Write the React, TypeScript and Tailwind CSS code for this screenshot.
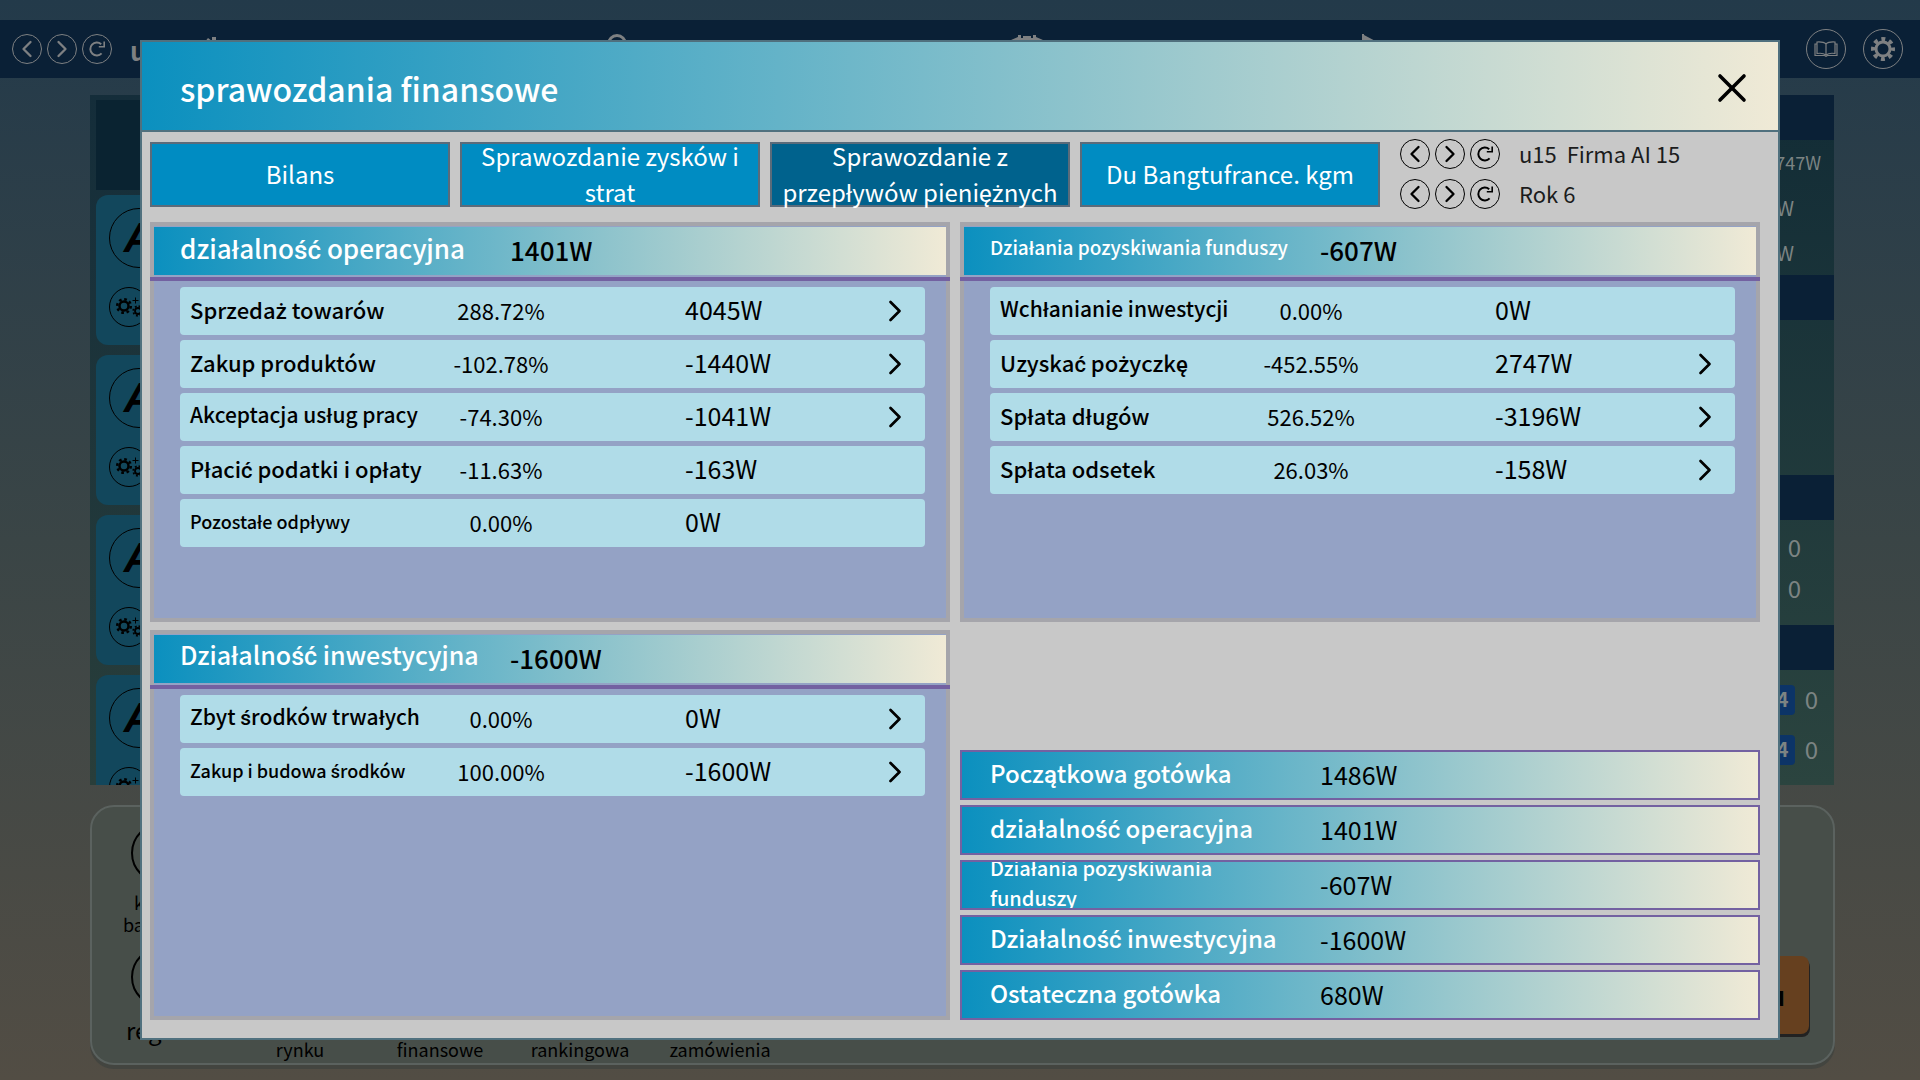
import { ChevronLeft, ChevronRight, X } from "lucide-react";
import { useState } from "react";

const TABS = [
  "Bilans",
  "Sprawozdanie zysków i strat",
  "Sprawozdanie z przepływów pieniężnych",
  "Du Bangtufrance. kgm",
];

type Row = {
  label: string;
  percent: string;
  value: string;
  more?: boolean;
  size?: string;
};

const OPERATING: Row[] = [
  { label: "Sprzedaż towarów", percent: "288.72%", value: "4045W", more: true },
  { label: "Zakup produktów", percent: "-102.78%", value: "-1440W", more: true },
  { label: "Akceptacja usług pracy", percent: "-74.30%", value: "-1041W", more: true, size: "text-[21px]" },
  { label: "Płacić podatki i opłaty", percent: "-11.63%", value: "-163W" },
  { label: "Pozostałe odpływy", percent: "0.00%", value: "0W", size: "text-lg" },
];

const FUNDING: Row[] = [
  { label: "Wchłanianie inwestycji", percent: "0.00%", value: "0W", size: "text-[21px]" },
  { label: "Uzyskać pożyczkę", percent: "-452.55%", value: "2747W", more: true },
  { label: "Spłata długów", percent: "526.52%", value: "-3196W", more: true },
  { label: "Spłata odsetek", percent: "26.03%", value: "-158W", more: true },
];

const INVESTING: Row[] = [
  { label: "Zbyt środków trwałych", percent: "0.00%", value: "0W", more: true, size: "text-[21px]" },
  { label: "Zakup i budowa środków", percent: "100.00%", value: "-1600W", more: true, size: "text-lg" },
];

const SUMMARY = [
  { label: "Początkowa gotówka", value: "1486W" },
  { label: "działalność operacyjna", value: "1401W" },
  { label: "Działania pozyskiwania funduszy", value: "-607W", size: "text-xl leading-[30px]" },
  { label: "Działalność inwestycyjna", value: "-1600W" },
  { label: "Ostateczna gotówka", value: "680W" },
];

// the CJK family has no Polish letters, so those come from Roboto
function Polish({ text }: { text: string }) {
  return (
    <>
      {text.split(/([śćżłęą])/).map((part, i) =>
        i % 2 ? (
          <span key={i} className="font-['Roboto',sans-serif] leading-none">
            {part}
          </span>
        ) : (
          part
        )
      )}
    </>
  );
}

function RefreshIcon() {
  return (
    <svg viewBox="0 0 18 18" className="size-[18px]" fill="none" stroke="currentColor">
      <path d="M13.200 4.200A6.500 6.500 0 1 0 13.600 13.400" strokeWidth="2" />
      <path d="M16.200 1.500V6.800H10.800" strokeWidth="1.600" />
    </svg>
  );
}

function Stepper({ name }: { name: string }) {
  return (
    <div className="flex gap-[5px]">
      <button
        aria-label={`${name}: poprzedni`}
        className="flex size-[30px] items-center justify-center rounded-full border border-current"
      >
        <ChevronLeft className="size-7 shrink-0" />
      </button>
      <button
        aria-label={`${name}: następny`}
        className="flex size-[30px] items-center justify-center rounded-full border border-current"
      >
        <ChevronRight className="size-7 shrink-0" />
      </button>
      <button
        aria-label={`${name}: odśwież`}
        className="flex size-[30px] items-center justify-center rounded-full border border-current"
      >
        <RefreshIcon />
      </button>
    </div>
  );
}

function Section({
  title,
  total,
  rows,
  size = "text-[26px]",
}: {
  title: string;
  total: string;
  rows: Row[];
  size?: string;
}) {
  return (
    <section className="flex flex-col border-4 border-[#a5a5ab] bg-[#94a2c5]">
      <div className="-mx-1 border-b-4 border-[#7361a1] px-1 pt-px pb-0.5">
        <div className="flex h-12 items-center bg-linear-to-r/srgb from-[#0b90bf] to-[#f0ead6] pb-1 pl-[26px] font-medium">
          <h2 className={`w-[330px] pb-1 whitespace-nowrap text-white ${size}`}>
            <Polish text={title} />
          </h2>
          <span className="text-[26px]">{total}</span>
        </div>
      </div>
      <ul className="flex flex-col gap-[5px] pt-1.5 pr-[21px] pl-[26px]">
        {rows.map((row) => (
          <li key={row.label} className="flex h-12 items-center rounded-sm bg-[#b0dce8] pr-3 pl-2.5">
            <span className={`w-[240px] pb-1 whitespace-nowrap font-medium ${row.size || "text-[22px]"}`}>
              <Polish text={row.label} />
            </span>
            <span className="w-[142px] pb-0.5 text-center text-[22px]">{row.percent}</span>
            <span className="flex-1 pb-0.5 pl-[113px] text-[25px]">{row.value}</span>
            {row.more && (
              <button aria-label={`Szczegóły: ${row.label}`}>
                <ChevronRight className="size-9" strokeWidth={1.8} />
              </button>
            )}
          </li>
        ))}
      </ul>
    </section>
  );
}

function NavBar() {
  return (
    <nav className="flex h-[58px] items-center bg-[#0a2036] pr-[17px] pl-3 text-[#7e8082]">
      <Stepper name="Gracz" />
      <span className="w-[74px] pl-[18px] text-[26px] font-bold">u</span>
      <div className="w-[421px] pl-[18px]">
        <svg viewBox="0 0 16 30" className="h-[30px] w-4" fill="currentColor">
          <path d="M0 9L4 4L8 7V3H12V30H0z" />
        </svg>
      </div>
      <div className="w-[404px]">
        <svg viewBox="0 0 20 30" className="h-[30px] w-5" fill="none" stroke="currentColor" strokeWidth="3">
          <circle cx="10" cy="10" r="8.5" />
        </svg>
      </div>
      <div className="w-[350px]">
        <svg viewBox="0 0 32 30" className="h-[30px] w-8" fill="currentColor">
          <path d="M0 6L7 3V1H10V4H12V2H20V4H22V1H25V3L32 6V14H0z" />
        </svg>
      </div>
      <svg viewBox="0 0 20 30" className="h-[30px] w-5" fill="currentColor">
        <path d="M1 0V30H3V14L20 10L3 1V0z" />
      </svg>
      <div className="ml-auto flex gap-[17px]">
        <button
          aria-label="Podręcznik"
          className="flex size-10 items-center justify-center rounded-full border border-current"
        >
          <svg viewBox="0 0 24 16" className="h-4 w-6" fill="none" stroke="currentColor" strokeWidth="1.2">
            <path d="M12 3C10 1 6 .8 3 1V12.500C6 12 10 12.500 12 14C14 12.500 18 12 21 12.500V1C18 .8 14 1 12 3V14" />
            <path d="M3 3H1V14.500H10.500L12 15.300L13.500 14.500H23V3H21" />
          </svg>
        </button>
        <button
          aria-label="Ustawienia"
          className="flex size-10 items-center justify-center rounded-full border border-current"
        >
          <svg viewBox="0 0 24 24" className="size-6" fill="none" stroke="currentColor">
            <circle cx="12" cy="12" r="7" strokeWidth="3" />
            <circle cx="12" cy="12" r="10" strokeWidth="4" strokeDasharray="3.927 3.927" strokeDashoffset="1.96" />
          </svg>
        </button>
      </div>
    </nav>
  );
}

function PlayerCard() {
  return (
    <div className="flex h-[150px] shrink-0 flex-col gap-[19px] rounded-xl bg-[#12475c] p-[13px]">
      <div className="flex size-[60px] items-center justify-center rounded-full border border-black font-['Liberation_Sans',sans-serif] text-[42px] leading-none font-bold italic">
        A
      </div>
      <div className="flex size-10 items-center justify-center rounded-full border border-black">
        <svg viewBox="0 0 30 22" className="h-[22px] w-[30px] shrink-0" fill="none" stroke="black">
          <circle cx="10" cy="10" r="4.500" strokeWidth="2.500" />
          <circle cx="10" cy="10" r="6.800" strokeWidth="2.500" strokeDasharray="2.670 2.670" />
          <circle cx="24" cy="15" r="3" strokeWidth="1.800" />
          <circle cx="24" cy="15" r="4.800" strokeWidth="1.800" strokeDasharray="1.885 1.885" />
          <path d="M21.500 1.500V7.500M18.500 4.500H24.500" />
        </svg>
      </div>
    </div>
  );
}

function Board() {
  return (
    <div className="mt-[17px] mr-[86px] ml-[90px] flex h-[690px] justify-between overflow-hidden">
      <div className="flex w-[300px] flex-col bg-linear-to-b from-[#142d3a] to-[#293e3a] pt-[5px] pl-1.5">
        <div className="mb-[5px] h-[90px] shrink-0 bg-[#0a2331]" />
        <div className="flex flex-col gap-2.5">
          <PlayerCard />
          <PlayerCard />
          <PlayerCard />
          <PlayerCard />
        </div>
      </div>
      <div className="w-[300px] bg-linear-to-b from-[#122c36] to-[#2b443f] text-right text-xl text-[#7c8483]">
        <div className="h-[45px] bg-[#0a2036]" />
        <p className="pr-[13px] text-lg leading-[45px]">2747W</p>
        <p className="pr-10 leading-[45px]">0W</p>
        <p className="pr-10 leading-[45px]">0W</p>
        <div className="h-[45px] bg-[#0a2036]" />
        <div className="h-[155px]" />
        <div className="h-[45px] bg-[#0a2036]" />
        <div className="h-[105px] pt-1.5 pr-[33px] text-2xl">
          <p className="leading-[41px]">0</p>
          <p className="leading-[41px]">0</p>
        </div>
        <div className="h-[45px] bg-[#0a2036]" />
        <div className="flex flex-col gap-5 pt-[15px] pr-4 text-2xl leading-[28px]">
          <p className="flex h-[30px] justify-end gap-2.5">
            <span className="w-[30px] rounded-sm bg-[#0c3467] pr-1.5 text-xl leading-[28px] font-bold">4</span>0
          </p>
          <p className="flex h-[30px] justify-end gap-2.5">
            <span className="w-[30px] rounded-sm bg-[#0c3467] pr-1.5 text-xl leading-[28px] font-bold">4</span>0
          </p>
        </div>
      </div>
    </div>
  );
}

function Dock() {
  return (
    <div className="mt-5 mr-[85px] ml-[90px] flex h-[260px] items-end justify-between rounded-3xl border-2 border-[#5b625f] bg-[#474e49] text-center text-lg leading-[22px] shadow-[0_4px_0_#434540]">
      <div className="flex h-full w-[138px] flex-col items-center pt-4">
        <div className="size-[60px] shrink-0 rounded-full border-2 border-black" />
        <p className="mt-2 w-[90px]">kredyt bankowy</p>
        <div className="mt-3 size-[60px] shrink-0 rounded-full border-2 border-black" />
        <p className="mt-3 text-2xl leading-[22px]">
          <Polish text="reguła" />
        </p>
      </div>
      <p className="w-[140px] pb-[3px]">rynku</p>
      <p className="w-[140px] pb-[3px]">finansowe</p>
      <p className="w-[140px] pb-[3px]">rankingowa</p>
      <p className="w-[140px] pb-[3px]">zamówienia</p>
      <button className="mr-6 mb-[29px] ml-auto h-[78px] w-40 rounded-lg bg-[#66401f] pr-6 text-right text-[26px] font-bold shadow-[1px_3px_0_#222]">
        Do przodu
      </button>
    </div>
  );
}

function App() {
  const [tab, setTab] = useState(2);

  return (
    <div className="relative min-h-screen bg-linear-to-b from-[#233a4a] via-[#3a4546] to-[#524d44] pt-5 pb-[15px] font-['Noto_Sans_CJK_SC',sans-serif] text-black">
      <NavBar />
      <Board />
      <Dock />

      <div className="absolute inset-0 flex px-[140px] py-10">
        <div
          role="dialog"
          aria-labelledby="dialog-title"
          className="flex flex-1 flex-col border-2 border-[#50707e] bg-[#c8c8c8]"
        >
          <header className="flex h-[90px] items-center justify-between border-b-2 border-[#50707e] bg-linear-to-r/srgb from-[#0b90bf] to-[#f0ead6] pt-1 pr-[22px] pl-[38px]">
            <h1 id="dialog-title" className="text-[32px] font-medium text-white">
              sprawozdania finansowe
            </h1>
            <button aria-label="Zamknij">
              <X className="size-12" strokeWidth={1.8} />
            </button>
          </header>

          <div className="flex items-center gap-2.5 px-2 pt-[7px]">
            {TABS.map((name, i) => (
              <button
                key={name}
                onClick={() => setTab(i)}
                className={`flex h-[65px] w-[300px] items-center justify-center border-2 border-[#5b6b7a] text-2xl leading-9 text-white ${
                  tab === i ? "bg-[#00628d]" : "bg-[#008cc2]"
                }`}
              >
                <span>
                  <Polish text={name} />
                </span>
              </button>
            ))}
            <div className="ml-2.5 flex flex-col gap-2.5">
              <div className="flex h-[30px] items-center gap-[19px]">
                <Stepper name="Firma" />
                <span className="pb-0.5 text-[22px] text-[#1c1c1c]">u15 &nbsp;Firma AI 15</span>
              </div>
              <div className="flex h-[30px] items-center gap-[19px]">
                <Stepper name="Rok" />
                <span className="pb-0.5 text-[22px] text-[#1c1c1c]">Rok 6</span>
              </div>
            </div>
          </div>

          <div className="grid flex-1 grid-cols-2 grid-rows-[400fr_390fr] gap-x-2.5 gap-y-2 pt-[13px] pr-[18px] pb-[18px] pl-2">
            <Section title="działalność operacyjna" total="1401W" rows={OPERATING} />
            <Section
              title="Działania pozyskiwania funduszy"
              total="-607W"
              rows={FUNDING}
              size="text-[19px]"
            />
            <Section
              title="Działalność inwestycyjna"
              total="-1600W"
              rows={INVESTING}
              size="text-[25px]"
            />
            <dl className="flex flex-col gap-[5px] self-end">
              {SUMMARY.map((item) => (
                <div
                  key={item.label}
                  className="flex h-[50px] items-center overflow-hidden border-2 border-[#7361a1] bg-linear-to-r/srgb from-[#0b90bf] to-[#f0ead6] pl-7"
                >
                  <dt className={`w-[330px] pr-10 pb-1 font-medium text-white ${item.size || "text-2xl"}`}>
                    <Polish text={item.label} />
                  </dt>
                  <dd className="text-[25px]">{item.value}</dd>
                </div>
              ))}
            </dl>
          </div>
        </div>
      </div>
    </div>
  );
}

export default App;
